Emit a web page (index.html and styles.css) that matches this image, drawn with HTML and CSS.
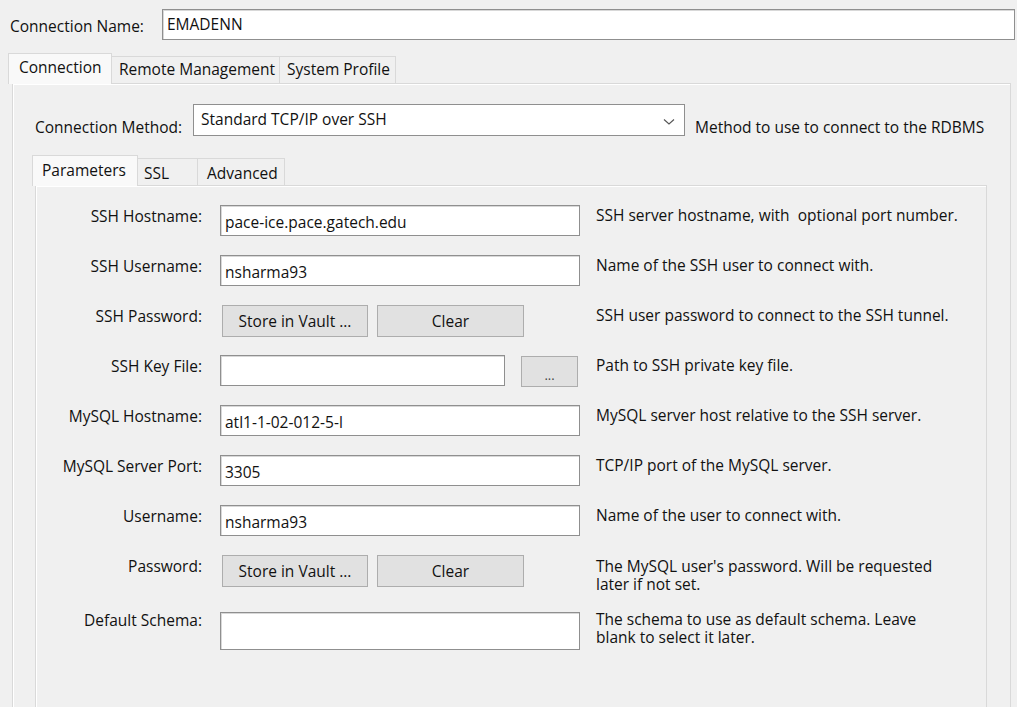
FILE: index.html
```html
<!DOCTYPE html>
<html>
<head>
<meta charset="utf-8">
<link rel="stylesheet" href="styles.css">
</head>
<body>
<div class="name-row">
  <span class="name-label">Connection Name:</span>
  <div class="textbox name-box">EMADENN</div>
</div>

<div class="tabbar outer-tabs">
  <div class="tab active">Connection</div>
  <div class="tab">Remote Management</div>
  <div class="tab">System Profile</div>
</div>
<div class="panel outer-panel">
  <div class="method-row">
    <span class="method-label">Connection Method:</span>
    <div class="select">
      <span>Standard TCP/IP over SSH</span>
      <svg class="chev" width="12" height="8" viewBox="0 0 12 8"><polyline points="1,1.5 6,6 11,1.5" fill="none" stroke="#555" stroke-width="1.1"/></svg>
    </div>
    <span class="method-desc">Method to use to connect to the RDBMS</span>
  </div>

  <div class="tabbar inner-tabs">
    <div class="tab active">Parameters</div>
    <div class="tab">SSL</div>
    <div class="tab">Advanced</div>
  </div>
  <div class="panel inner-panel">
    <div class="form">
      <div class="row">
        <span class="lbl">SSH Hostname:</span>
        <div class="field"><div class="textbox full">pace-ice.pace.gatech.edu</div></div>
        <span class="desc">SSH server hostname, with&nbsp; optional port number.</span>
      </div>
      <div class="row">
        <span class="lbl">SSH Username:</span>
        <div class="field"><div class="textbox full">nsharma93</div></div>
        <span class="desc">Name of the SSH user to connect with.</span>
      </div>
      <div class="row">
        <span class="lbl">SSH Password:</span>
        <div class="field btns"><button class="btn vault">Store in Vault ...</button><button class="btn clear">Clear</button></div>
        <span class="desc">SSH user password to connect to the SSH tunnel.</span>
      </div>
      <div class="row">
        <span class="lbl">SSH Key File:</span>
        <div class="field keyfile"><div class="textbox key"></div><button class="btn dots">...</button></div>
        <span class="desc">Path to SSH private key file.</span>
      </div>
      <div class="row">
        <span class="lbl">MySQL Hostname:</span>
        <div class="field"><div class="textbox full">atl1-1-02-012-5-l</div></div>
        <span class="desc">MySQL server host relative to the SSH server.</span>
      </div>
      <div class="row">
        <span class="lbl">MySQL Server Port:</span>
        <div class="field"><div class="textbox full">3305</div></div>
        <span class="desc">TCP/IP port of the MySQL server.</span>
      </div>
      <div class="row">
        <span class="lbl">Username:</span>
        <div class="field"><div class="textbox full">nsharma93</div></div>
        <span class="desc">Name of the user to connect with.</span>
      </div>
      <div class="row">
        <span class="lbl">Password:</span>
        <div class="field btns"><button class="btn vault">Store in Vault ...</button><button class="btn clear">Clear</button></div>
        <span class="desc two"><span class="line">The MySQL user's password. Will be requested</span><span class="line">later if not set.</span></span>
      </div>
      <div class="row last">
        <span class="lbl">Default Schema:</span>
        <div class="field tallfield"><div class="textbox full tall"></div></div>
        <span class="desc two"><span class="line">The schema to use as default schema. Leave</span><span class="line">blank to select it later.</span></span>
      </div>
    </div>
  </div>
</div>
</body>
</html>
```

FILE: styles.css
```css
* { box-sizing: border-box; }
html, body {
  margin: 0;
  padding: 0;
  background: #f0f0f0;
  height: 707px;
  overflow: hidden;
}
body {
  font-family: "Open Sans", "Noto Sans", sans-serif;
  font-size: 15.5px;
  color: #111;
  line-height: 17px;
}

.textbox {
  background: #fff;
  border: 1px solid #8f8f8f;
  box-shadow: inset 1px 1px 0 #d8d8d8;
  height: 31px;
  padding: 8px 3px 0 4px;
  white-space: nowrap;
  overflow: hidden;
}

.name-row {
  display: flex;
  align-items: flex-start;
  padding: 9px 2px 0 10px;
}
.name-label {
  width: 152px;
  padding-top: 9px;
}
.name-box {
  flex: 1;
  height: 31px;
  padding-top: 6px;
}

.tabbar {
  display: flex;
  align-items: flex-end;
  position: relative;
  z-index: 1;
}
.tab {
  height: 27px;
  padding: 4px 7px 0 7px;
  border: 1px solid #d9d9d9;
  border-bottom: none;
  margin-right: -1px;
  background: #f0f0f0;
  white-space: nowrap;
}
.tab.active {
  height: 31px;
  padding-top: 5px;
  background: #f9f9f9;
  border-color: #d9d9d9;
  margin-bottom: -1px;
}
.outer-tabs {
  margin: 13px 0 0 8px;
}
.outer-tabs .tab.active { width: 104px; padding-left: 10px; }
.outer-tabs .tab:nth-child(2) { width: 169px; }
.outer-tabs .tab:nth-child(3) { width: 117px; }

.panel {
  border: 1px solid #d9d9d9;
  box-shadow: inset 1px 1px 0 #fff;
}
.outer-panel {
  margin: 0 6px 0 12px;
  height: 640px;
  padding: 20px 0 0 22px;
}

.method-row {
  display: flex;
  align-items: flex-start;
}
.method-label {
  width: 158px;
  padding-top: 15px;
}
.select {
  width: 492px;
  height: 32px;
  background: #fff;
  border: 1px solid #8f8f8f;
  display: flex;
  justify-content: space-between;
  align-items: flex-start;
  padding: 6px 9px 0 7px;
}
.chev { margin-top: 7px; }
.method-desc {
  margin-left: 10px;
  padding-top: 15px;
}

.inner-tabs {
  margin: 19px 0 0 -3px;
}
.inner-tabs .tab { padding-top: 6px; }
.inner-tabs .tab.active { width: 106px; padding-left: 9px; padding-top: 6px; }
.inner-tabs .tab:nth-child(2) { width: 61px; padding-left: 6px; }
.inner-tabs .tab:nth-child(3) { width: 88px; padding-left: 9px; }

.inner-panel {
  margin-right: 23px;
  height: 540px;
  padding: 19px 0 0 0;
}

.form {
  display: flex;
  flex-direction: column;
}
.row {
  display: grid;
  grid-template-columns: 166px 360px auto;
  column-gap: 18px;
  height: 50px;
  align-items: start;
}
.lbl {
  text-align: right;
  padding-top: 3px;
  white-space: nowrap;
}
.desc {
  padding-top: 2px;
  margin-left: -2px;
  white-space: nowrap;
}
.desc.two { padding-top: 3px; }
.desc .line { display: block; line-height: 17.5px; }
.textbox.full { width: 360px; }
.textbox.tall { height: 38px; }
.row.last .lbl { padding-top: 7px; }
.row.last .desc.two { padding-top: 6px; }
.tallfield { padding-top: 7px; }

.btns {
  display: flex;
  gap: 9px;
  padding-left: 2px;
}
.btn {
  font-family: inherit;
  font-size: 15.5px;
  color: #111;
  background: #e1e1e1;
  border: 1px solid #adadad;
  height: 32px;
  padding: 0;
  margin: 0;
}
.btn.vault { width: 146px; }
.btn.clear { width: 147px; }
.keyfile {
  display: flex;
  gap: 16px;
}
.textbox.key { width: 285px; flex: none; }
.btn.dots {
  width: 57px;
  height: 31px;
  margin-top: 1px;
  padding-top: 6px;
  font-size: 13px;
  color: #444;
  flex: none;
}
```
